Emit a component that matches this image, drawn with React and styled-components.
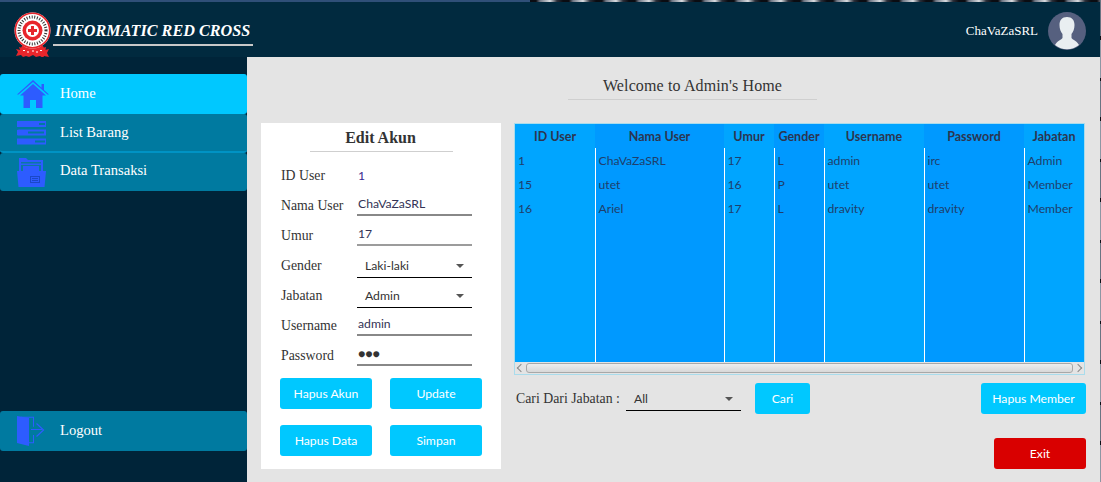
import React from 'react';
import styled, { createGlobalStyle } from 'styled-components';

const GlobalStyle = createGlobalStyle`
  html, body {
    margin: 0;
    padding: 0;
    height: 482px;
    overflow: hidden;
    background: #e4e4e4;
  }
  * {
    box-sizing: border-box;
  }
`;

const serif = `"Liberation Serif", "Times New Roman", serif`;
const sans = `Lato, "Open Sans", sans-serif`;

const columns = [
  { title: 'ID User', width: 80, key: 'id' },
  { title: 'Nama User', width: 129, key: 'name' },
  { title: 'Umur', width: 50, key: 'age' },
  { title: 'Gender', width: 50, key: 'gender' },
  { title: 'Username', width: 100, key: 'username' },
  { title: 'Password', width: 100, key: 'password' },
  { title: 'Jabatan', width: 60, key: 'role' },
];

const users = [
  { id: '1', name: 'ChaVaZaSRL', age: '17', gender: 'L', username: 'admin', password: 'irc', role: 'Admin' },
  { id: '15', name: 'utet', age: '16', gender: 'P', username: 'utet', password: 'utet', role: 'Member' },
  { id: '16', name: 'Ariel', age: '17', gender: 'L', username: 'dravity', password: 'dravity', role: 'Member' },
];

const Logo = () => (
  <svg width="37" height="46" viewBox="0 0 37 46">
    <path d="M2 37l4 1 2-4 21 0 2 4 4-1-2 4 2 4-5-1-1 2-3-2-4 1-3-2-4 2-3-1-3 1-2-2-5 1 2-4z" fill="#e8262c" />
    <circle cx="18.500" cy="18.500" r="18" fill="#fff" />
    <circle cx="18.500" cy="18.500" r="17.200" fill="none" stroke="#e8262c" strokeWidth="1.600" />
    <circle cx="18.500" cy="18.500" r="13.500" fill="none" stroke="#333" strokeWidth="3" strokeDasharray="1 1.600" />
    <circle cx="18.500" cy="18.500" r="10" fill="#e8262c" />
    <circle cx="18.500" cy="18.500" r="6.500" fill="#fff" />
    <path d="M17 14h3v3h3v3h-3v3h-3v-3h-3v-3h3z" fill="#e8262c" />
    <path d="M5 35l7 2 6.500 1 6.500-1 7-2-1 6-5-1-3 2-4-1-4 1-3-2-5 1z" fill="#e8262c" />
    <path d="M9 38.500h2M13 40h2M18 39h2M22 40h2M26 38.500h2" stroke="#fff" strokeWidth="1" />
  </svg>
);

const Avatar = () => (
  <svg width="38" height="38" viewBox="0 0 38 38">
    <circle cx="19" cy="19" r="19" fill="#56607f" />
    <path d="M19 5c-5 0-7.500 3-7.500 8 0 3.800 1.300 7 3 9v4c-1.500 2-5.500 3-7.500 7a19 19 0 0 0 24 0c-2-4-6-5-7.500-7v-4c1.700-2 3-5.200 3-9 0-5-2.500-8-7.500-8z" fill="#e9eef1" />
  </svg>
);

const HomeIcon = () => (
  <svg width="32" height="28" viewBox="0 0 32 28" fill="#2d5cff">
    <path d="M16 0L0 14.500h1.500L16 2l14.500 12.500H32L27 10V4h-2.500v3.800z" />
    <path d="M16 4L3 15.500h3.500V28h6.500v-8h6v8h6.500V15.500H29z" />
  </svg>
);

const ListIcon = () => (
  <svg width="29" height="24" viewBox="0 0 29 24" fill="#2d5cff">
    <path fillRule="evenodd" d="M0 0h29v6H0zM22 2v2h6V2z" />
    <path fillRule="evenodd" d="M2 8.500h27v6H2a3 3 0 0 1 0-6zM11 10.500v2h16v-2z" />
    <path fillRule="evenodd" d="M0 17.500h29v6H0zM18 19.500v2h10v-2z" />
  </svg>
);

const FolderIcon = () => (
  <svg width="29" height="29" viewBox="0 0 29 29" fill="#2d5cff">
    <path d="M2 0h7l2 2h15v11H2z" />
    <path d="M4 4h20v1.500H4zM4 7h20v6H4z" fill="#0a78a4" />
    <path d="M6 8h16v5H6z" />
    <path d="M0 13h29l-1.500 16H1.500z" />
    <rect x="13.500" y="18.500" width="9" height="6" fill="none" stroke="#1a48c8" strokeWidth="1" />
    <path d="M15 20.500h6M15 22.500h6" stroke="#1a48c8" strokeWidth="1" />
  </svg>
);

const LogoutIcon = () => (
  <svg width="28" height="30" viewBox="0 0 28 30" fill="#2d5cff">
    <path d="M0 0l12 2v28L0 27z" />
    <path d="M4 .800h13v10h-1V1.800H4zM17 19v8.200h-5v-1h4V19z" />
    <path d="M14 13.500h11M19.500 7.500l7 6.500-7 6.500" fill="none" stroke="#2d5cff" strokeWidth="1.200" />
  </svg>
);

const Arrow = styled.span`
  width: 0;
  height: 0;
  border-left: 4px solid transparent;
  border-right: 4px solid transparent;
  border-top: 4px solid #555;
`;

const Page = styled.div`
  width: 1101px;
  height: 482px;
  display: flex;
  overflow: hidden;
  font-family: ${serif};
`;

const Window = styled.div`
  width: 1100px;
  flex: none;
  display: flex;
  flex-direction: column;
  background: #012a3f;
`;

const WindowEdge = styled.div`
  width: 1px;
  flex: none;
  background: repeating-linear-gradient(180deg, #6a7482 0 36px, #0c0f16 36px 40px, #8d96a3 40px 78px, #0c0f16 78px 81px);
`;

const TopStrip = styled.div`
  height: 2px;
  flex: none;
  background:
    repeating-linear-gradient(90deg, #0a0c12 0 6px, #6f7785 10px, #d8dce0 20px, #2a2f3a 27px, #0a0c12 33px) 530px 0 no-repeat,
    #2f4f78;
  background-size: 570px 2px, auto;
`;

const Header = styled.header`
  height: 55px;
  flex: none;
  display: flex;
  align-items: flex-start;
  background: #012a3f;
  padding: 10px 14px 0 14px;
`;

const Brand = styled.div`
  display: flex;
  gap: 2px;
`;

const BrandTitle = styled.h1`
  margin: 8px 0 0;
  width: 200px;
  height: 26px;
  padding-left: 2px;
  border-bottom: 2px solid #c8c8c8;
  font-size: 16.200px;
  line-height: 22px;
  font-style: italic;
  font-weight: bold;
  color: #fff;
  white-space: nowrap;
`;

const UserBox = styled.div`
  margin-left: auto;
  display: flex;
  align-items: center;
  gap: 10px;
  color: #fff;
  font-size: 13px;
`;

const Body = styled.div`
  flex: 1;
  display: flex;
  min-height: 0;
`;

const Sidebar = styled.nav`
  width: 247px;
  flex: none;
  display: flex;
  flex-direction: column;
  padding: 17px 0 31px;
  background: #002439;
`;

const NavItem = styled.div`
  display: flex;
  align-items: center;
  height: ${(p) => p.$height || 39}px;
  flex: none;
  border-radius: 3px;
  background: ${(p) => (p.$active ? '#00c8ff' : '#007aa0')};
  border-bottom: ${(p) => (p.$line ? '2px solid #0093c4' : 'none')};
  color: #fff;
  font-size: 14.600px;
  margin-top: ${(p) => (p.$bottom ? 'auto' : '0')};
`;

const NavIcon = styled.span`
  width: 60px;
  flex: none;
  padding-left: 17px;
  display: flex;
  align-items: center;
`;

const NavLabel = styled.span`
  padding-bottom: ${(p) => p.$lift || 0}px;
`;

const Main = styled.main`
  flex: 1;
  background: #e4e4e4;
  padding: 0 0 0 14px;
  min-width: 0;
`;

const Heading = styled.h2`
  margin: 17px 0 23px 307px;
  width: 249px;
  height: 26px;
  border-bottom: 1px solid #cfcfcf;
  font-size: 16px;
  letter-spacing: 0.130px;
  font-weight: normal;
  line-height: 23px;
  text-align: center;
  color: #333;
`;

const Content = styled.div`
  display: flex;
  gap: 13px;
`;

const FormCard = styled.section`
  width: 240px;
  height: 346px;
  flex: none;
  background: #fff;
  padding: 5px 19px 0;
`;

const FormTitle = styled.h3`
  margin: 0 0 8px 30px;
  width: 143px;
  height: 24px;
  padding-right: 2px;
  border-bottom: 1px solid #cfcfcf;
  font-size: 16px;
  line-height: 20px;
  text-align: center;
  color: #333;
`;

const FormRow = styled.div`
  display: grid;
  grid-template-columns: 76px 115px;
  height: 30px;
  padding-left: 1px;
  align-items: center;
`;

const Label = styled.span`
  padding-top: 2px;
  font-size: 13.800px;
  color: #333;
  white-space: nowrap;
`;

const Value = styled.span`
  font-family: ${sans};
  font-size: 12.200px;
  color: #3b2a90;
  padding-left: 1px;
`;

const TextField = styled.div`
  align-self: start;
  height: 26px;
  padding: 5px 0 0 1px;
  border-bottom: 2px solid ${(p) => p.$line || '#888'};
  font-family: ${sans};
  font-size: 12.200px;
  line-height: 18px;
  color: #333355;
`;

const Dots = styled.span`
  font-size: 12px;
  color: #333;
  font-weight: bold;
`;

const SelectField = styled.div`
  align-self: start;
  width: ${(p) => p.$width || 115}px;
  height: 28px;
  padding: 4px 8px 0 8px;
  display: flex;
  align-items: center;
  justify-content: space-between;
  border-bottom: 1px solid #000;
  font-family: ${sans};
  font-size: 12.200px;
  color: #333;
`;

const ButtonGrid = styled.div`
  display: grid;
  grid-template-columns: 92px 92px;
  column-gap: 18px;
  row-gap: 16px;
  margin-top: 8px;
`;

const Button = styled.button`
  height: 31px;
  width: ${(p) => (p.$width ? `${p.$width}px` : 'auto')};
  padding: 0;
  border: none;
  border-radius: 3px;
  background: ${(p) => p.$bg || '#00c8ff'};
  color: #fff;
  font-family: ${sans};
  font-size: 12.200px;
`;

const PushedButton = styled(Button)`
  margin-left: auto;
`;

const RightColumn = styled.section`
  width: 572px;
  flex: none;
`;

const TableFrame = styled.div`
  width: 571px;
  height: 252px;
  border: 1px solid #a9dcec;
  display: flex;
  flex-direction: column;
  background: #e4e4e4;
`;

const Table = styled.table`
  width: 569px;
  height: 238px;
  table-layout: fixed;
  border-collapse: collapse;
  font-family: ${sans};
`;

const HeadCell = styled.th`
  height: 24px;
  padding: 0;
  background: ${(p) => (p.$alt ? '#0099ff' : '#00a5ff')};
  font-size: 12.500px;
  font-weight: bold;
  color: #2c3550;
  white-space: nowrap;
`;

const Cell = styled.td`
  height: ${(p) => (p.$fill ? 142 : 24)}px;
  padding: 0 0 0 3px;
  background: ${(p) => (p.$alt ? '#0099ff' : '#00a5ff')};
  border-left: ${(p) => (p.$first ? 'none' : '1px solid #fff')};
  font-size: 12.200px;
  color: #1f3f6c;
  white-space: nowrap;
`;

const ScrollBar = styled.div`
  height: 12px;
  flex: none;
  display: flex;
  align-items: center;
  gap: 2px;
  padding: 0 2px;
`;

const Thumb = styled.div`
  flex: 1;
  height: 10px;
  border: 1px solid #a8a8a8;
  border-radius: 3px;
  background: linear-gradient(#eeeeee, #d8d8d8);
`;

const Chevron = styled.span`
  width: 6px;
  height: 6px;
  flex: none;
  border-left: 1px solid #888;
  border-bottom: 1px solid #888;
  transform: rotate(${(p) => (p.$right ? 225 : 45)}deg);
  margin: ${(p) => (p.$right ? '0 1px 0 0' : '0 0 0 1px')};
`;

const Toolbar = styled.div`
  display: flex;
  align-items: flex-start;
  margin-top: 8px;
  padding-left: 2px;
  height: 31px;
`;

const SearchLabel = styled.span`
  font-size: 13.800px;
  line-height: 32px;
  color: #333;
  width: 110px;
  white-space: nowrap;
`;

const SearchSelect = styled(SelectField)`
  margin-right: 14px;
`;

const ExitRow = styled.div`
  display: flex;
  justify-content: flex-end;
  margin-top: 24px;
`;

const App = () => {
  return (
    <Page>
      <GlobalStyle />
      <Window>
        <TopStrip />
        <Header>
          <Brand>
            <Logo />
            <BrandTitle>INFORMATIC RED CROSS</BrandTitle>
          </Brand>
          <UserBox>
            ChaVaZaSRL
            <Avatar />
          </UserBox>
        </Header>
        <Body>
          <Sidebar>
            <NavItem $active $height={40}>
              <NavIcon><HomeIcon /></NavIcon>
              <NavLabel $lift={2}>Home</NavLabel>
            </NavItem>
            <NavItem $line>
              <NavIcon><ListIcon /></NavIcon>
              <NavLabel>List Barang</NavLabel>
            </NavItem>
            <NavItem $height={38}>
              <NavIcon><FolderIcon /></NavIcon>
              <NavLabel $lift={4}>Data Transaksi</NavLabel>
            </NavItem>
            <NavItem $bottom $height={40}>
              <NavIcon><LogoutIcon /></NavIcon>
              <NavLabel $lift={2}>Logout</NavLabel>
            </NavItem>
          </Sidebar>
          <Main>
            <Heading>Welcome to Admin's Home</Heading>
            <Content>
              <FormCard>
                <FormTitle>Edit Akun</FormTitle>
                <FormRow>
                  <Label>ID User</Label>
                  <Value>1</Value>
                </FormRow>
                <FormRow>
                  <Label>Nama User</Label>
                  <TextField>ChaVaZaSRL</TextField>
                </FormRow>
                <FormRow>
                  <Label>Umur</Label>
                  <TextField $line="#9c9c9c">17</TextField>
                </FormRow>
                <FormRow>
                  <Label>Gender</Label>
                  <SelectField>Laki-laki<Arrow /></SelectField>
                </FormRow>
                <FormRow>
                  <Label>Jabatan</Label>
                  <SelectField>Admin<Arrow /></SelectField>
                </FormRow>
                <FormRow>
                  <Label>Username</Label>
                  <TextField>admin</TextField>
                </FormRow>
                <FormRow>
                  <Label>Password</Label>
                  <TextField><Dots>●●●</Dots></TextField>
                </FormRow>
                <ButtonGrid>
                  <Button>Hapus Akun</Button>
                  <Button>Update</Button>
                  <Button>Hapus Data</Button>
                  <Button>Simpan</Button>
                </ButtonGrid>
              </FormCard>
              <RightColumn>
                <TableFrame>
                  <Table>
                    <colgroup>
                      {columns.map((col) => (
                        <col key={col.key} style={{ width: col.width }} />
                      ))}
                    </colgroup>
                    <thead>
                      <tr>
                        {columns.map((col, i) => (
                          <HeadCell key={col.key} $alt={i % 2 === 1}>{col.title}</HeadCell>
                        ))}
                      </tr>
                    </thead>
                    <tbody>
                      {users.map((user) => (
                        <tr key={user.id}>
                          {columns.map((col, i) => (
                            <Cell key={col.key} $alt={i % 2 === 1} $first={i === 0}>{user[col.key]}</Cell>
                          ))}
                        </tr>
                      ))}
                      <tr>
                        {columns.map((col, i) => (
                          <Cell key={col.key} $fill $alt={i % 2 === 1} $first={i === 0} />
                        ))}
                      </tr>
                    </tbody>
                  </Table>
                  <ScrollBar>
                    <Chevron />
                    <Thumb />
                    <Chevron $right />
                  </ScrollBar>
                </TableFrame>
                <Toolbar>
                  <SearchLabel>Cari Dari Jabatan :</SearchLabel>
                  <SearchSelect>All<Arrow /></SearchSelect>
                  <Button $width={55}>Cari</Button>
                  <PushedButton $width={105}>Hapus Member</PushedButton>
                </Toolbar>
                <ExitRow>
                  <Button $width={92} $bg="#d90000">Exit</Button>
                </ExitRow>
              </RightColumn>
            </Content>
          </Main>
        </Body>
      </Window>
      <WindowEdge />
    </Page>
  );
};

export default App;
